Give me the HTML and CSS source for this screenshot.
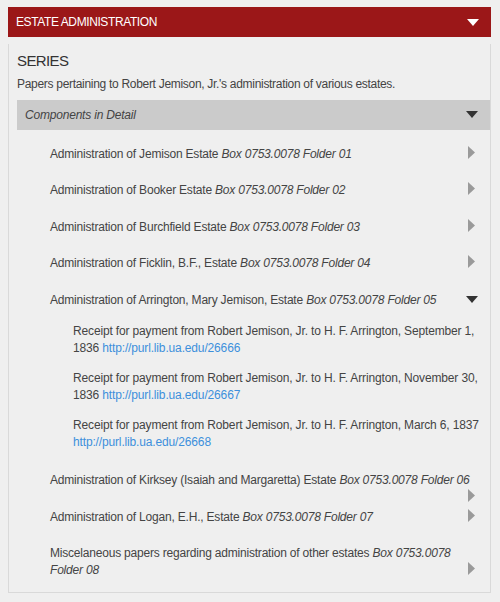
FILE: index.html
```html
<!DOCTYPE html>
<html>
<head>
<meta charset="utf-8">
<link rel="stylesheet" href="styles.css">
</head>
<body>
<div class="header">
  <span class="header-title">ESTATE ADMINISTRATION</span>
  <svg class="header-caret" width="12" height="7" viewBox="0 0 12 7"><polygon points="0,0 12,0 6,7" fill="#ffffff"/></svg>
</div>
<div class="panel">
  <h2 class="series">SERIES</h2>
  <p class="desc">Papers pertaining to Robert Jemison, Jr.'s administration of various estates.</p>
  <div class="bar">
    <span class="bar-title">Components in Detail</span>
    <svg class="bar-caret" width="12" height="7" viewBox="0 0 12 7"><polygon points="0,0 12,0 6,7" fill="#333333"/></svg>
  </div>
  <ul class="list">
    <li class="item">Administration of Jemison Estate <em>Box 0753.0078 Folder 01</em><span class="arrow"><svg width="7" height="13" viewBox="0 0 7 13"><polygon points="0,0 7,6.5 0,13" fill="#9a9a9a"/></svg></span></li>
    <li class="item">Administration of Booker Estate <em>Box 0753.0078 Folder 02</em><span class="arrow"><svg width="7" height="13" viewBox="0 0 7 13"><polygon points="0,0 7,6.5 0,13" fill="#9a9a9a"/></svg></span></li>
    <li class="item">Administration of Burchfield Estate <em>Box 0753.0078 Folder 03</em><span class="arrow"><svg width="7" height="13" viewBox="0 0 7 13"><polygon points="0,0 7,6.5 0,13" fill="#9a9a9a"/></svg></span></li>
    <li class="item">Administration of Ficklin, B.F., Estate <em>Box 0753.0078 Folder 04</em><span class="arrow"><svg width="7" height="13" viewBox="0 0 7 13"><polygon points="0,0 7,6.5 0,13" fill="#9a9a9a"/></svg></span></li>
    <li class="item">Administration of Arrington, Mary Jemison, Estate <em>Box 0753.0078 Folder 05</em><span class="caret-down"><svg width="12" height="7" viewBox="0 0 12 7"><polygon points="0,0 12,0 6,7" fill="#333333"/></svg></span></li>
    <li class="sub">
      <p class="receipt">Receipt for payment from Robert Jemison, Jr. to H. F. Arrington, September 1, 1836 <a href="#">http://purl.lib.ua.edu/26666</a></p>
      <p class="receipt">Receipt for payment from Robert Jemison, Jr. to H. F. Arrington, November 30, 1836 <a href="#">http://purl.lib.ua.edu/26667</a></p>
      <p class="receipt">Receipt for payment from Robert Jemison, Jr. to H. F. Arrington, March 6, 1837 <a href="#">http://purl.lib.ua.edu/26668</a></p>
    </li>
    <li class="item">Administration of Kirksey (Isaiah and Margaretta) Estate <em>Box 0753.0078 Folder 06</em><span class="arrow"><svg width="7" height="13" viewBox="0 0 7 13"><polygon points="0,0 7,6.5 0,13" fill="#9a9a9a"/></svg></span></li>
    <li class="item">Administration of Logan, E.H., Estate <em>Box 0753.0078 Folder 07</em><span class="arrow"><svg width="7" height="13" viewBox="0 0 7 13"><polygon points="0,0 7,6.5 0,13" fill="#9a9a9a"/></svg></span></li>
    <li class="item">Miscelaneous papers regarding administration of other estates <em>Box 0753.0078 Folder 08</em><span class="arrow"><svg width="7" height="13" viewBox="0 0 7 13"><polygon points="0,0 7,6.5 0,13" fill="#9a9a9a"/></svg></span></li>
  </ul>
</div>
</body>
</html>
```
FILE: styles.css
```css
html, body {
  margin: 0;
  padding: 0;
}
body {
  background: #efefef;
  font-family: "Liberation Sans", Arial, sans-serif;
  color: #444444;
  padding: 7px 9px 0 8px;
}
.header {
  height: 30px;
  background: #9b1718;
  display: flex;
  align-items: center;
  justify-content: space-between;
  padding: 0 12px 0 8px;
}
.header-title {
  color: #ffffff;
  font-size: 12px;
  letter-spacing: -0.4px;
}
.header-caret {
  display: block;
}
.panel {
  margin-top: 7px;
  border: 1px solid #d9d9d9;
  border-top: none;
  padding: 8px 0 4px 8px;
}
.series {
  margin: 0;
  font-size: 15px;
  font-weight: normal;
  color: #333333;
  line-height: 18px;
  letter-spacing: -0.6px;
}
.desc {
  margin: 6px 0 7px;
  font-size: 12px;
  line-height: 16.5px;
  letter-spacing: -0.3px;
  color: #444444;
}
.bar {
  height: 30px;
  background: #cbcbcb;
  display: flex;
  align-items: center;
  justify-content: space-between;
  padding: 0 12px 0 8px;
}
.bar-title {
  font-style: italic;
  font-size: 12px;
  letter-spacing: -0.2px;
  color: #444444;
}
.bar-caret {
  display: block;
}
.list {
  list-style: none;
  margin: 0;
  padding: 6px 10px 0 33px;
}
.item {
  font-size: 12px;
  line-height: 16.5px;
  letter-spacing: -0.2px;
  padding: 10px 0;
}
.item em {
  font-style: italic;
}
.arrow {
  float: right;
  width: 20px;
  height: 13px;
}
.arrow svg {
  display: block;
  margin-left: 8px;
}
.caret-down {
  float: right;
  width: 14px;
  height: 16px;
}
.caret-down svg {
  display: block;
  margin-top: 4px;
}
.sub {
  padding: 5px 0 0 23px;
}
.receipt {
  margin: 0 0 14px;
  font-size: 12px;
  line-height: 16.5px;
  letter-spacing: -0.15px;
}
.receipt:last-child {
  margin-bottom: 12px;
}
.receipt a {
  color: #3d8fdc;
  text-decoration: none;
}
```
